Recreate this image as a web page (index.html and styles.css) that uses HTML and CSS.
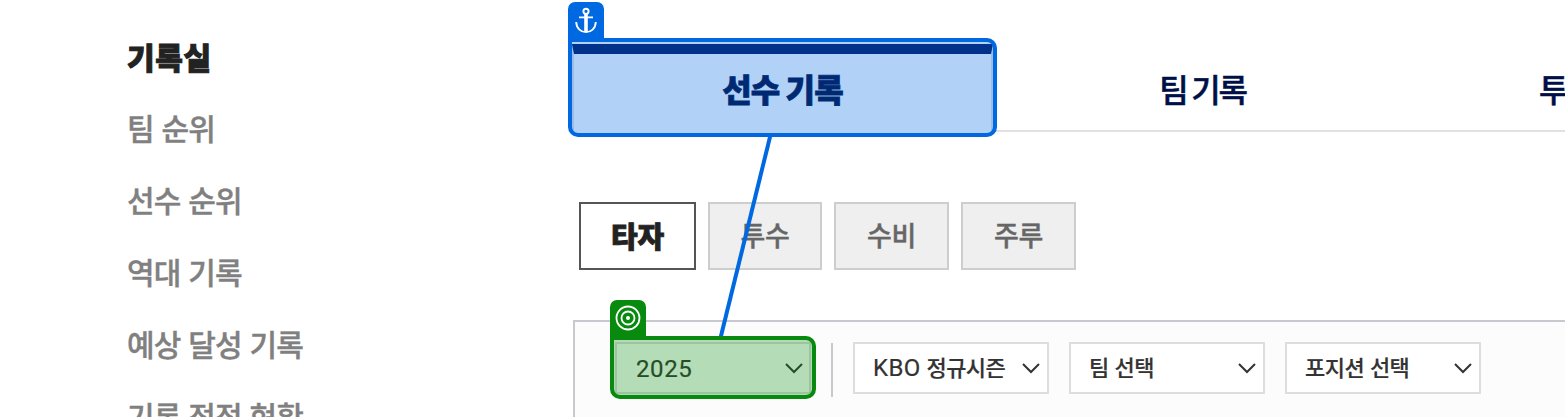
FILE: index.html
```html
<!DOCTYPE html>
<html lang="ko">
<head>
<meta charset="utf-8">
<title>기록실</title>
<link rel="stylesheet" href="styles.css">
</head>
<body>
<div class="page">
  <nav class="sidebar">
    <a class="side-link current">기록실</a>
    <a class="side-link">팀 순위</a>
    <a class="side-link">선수 순위</a>
    <a class="side-link">역대 기록</a>
    <a class="side-link">예상 달성 기록</a>
    <a class="side-link">기록 정정 현황</a>
  </nav>
  <main class="content">
    <div class="tabs">
      <a class="tab active">선수 기록</a>
      <a class="tab">팀 기록</a>
      <a class="tab cut">투</a>
    </div>
    <div class="pills">
      <a class="pill on">타자</a>
      <a class="pill narrow">투수</a>
      <a class="pill">수비</a>
      <a class="pill">주루</a>
    </div>
    <div class="filters">
      <div class="select year"><span>2025</span><svg class="chevron" viewBox="0 0 18 11"><path d="M1 1l8 8 8-8"/></svg></div>
      <div class="divider"></div>
      <div class="select"><span><span class="latin">KBO</span> 정규시즌</span><svg class="chevron" viewBox="0 0 18 11"><path d="M1 1l8 8 8-8"/></svg></div>
      <div class="select"><span>팀 선택</span><svg class="chevron" viewBox="0 0 18 11"><path d="M1 1l8 8 8-8"/></svg></div>
      <div class="select"><span>포지션 선택</span><svg class="chevron" viewBox="0 0 18 11"><path d="M1 1l8 8 8-8"/></svg></div>
    </div>
  </main>
  <svg class="connector" viewBox="0 0 1565 417"><path d="M770.5 135L720.5 338"/></svg>
  <div class="mark anchor">
    <svg class="badge" viewBox="0 0 36 38"><g fill="none" stroke="#fff" stroke-width="1.9"><circle cx="18" cy="9.300" r="2.600"/><path stroke-width="3.600" d="M18 12v18"/><path d="M11 15.400h14"/><path d="M8.200 20c.4 13.500 19.200 13.500 19.600 0"/></g></svg>
  </div>
  <div class="mark target">
    <svg class="badge" viewBox="0 0 36 38"><g fill="none" stroke="#fff" stroke-width="1.800"><circle cx="18" cy="18" r="11.500"/><circle cx="18" cy="18" r="6.500"/></g><circle cx="18" cy="18" r="2" fill="#fff"/></svg>
  </div>
</div>
</body>
</html>
```
FILE: styles.css
```css
* { box-sizing: border-box; }
body { margin: 0; background: #fff; overflow: hidden; font-family: "Noto Sans CJK KR", sans-serif; }
.page { position: relative; display: flex; width: 1565px; height: 417px; overflow: hidden; }
.sidebar { display: flex; flex-direction: column; flex: none; width: 572px; padding: 19px 0 0 127px; }
.side-link { flex: none; height: 72px; line-height: 72px; font-size: 30px; font-weight: 500; letter-spacing: -0.8px; color: #808080; white-space: nowrap; -webkit-text-stroke: 0.4px; }
.side-link.current { font-weight: 900; letter-spacing: 0.7px; line-height: 74px; color: #222; -webkit-text-stroke: 1px; }
.content { flex: none; width: 993px; padding-top: 44px; }
.tabs { display: flex; height: 88px; border-bottom: 2px solid #e1e1e1; }
.tab { flex: none; width: 421px; height: 86px; padding: 9px 2px 0 0; line-height: 70px; text-align: center; font-size: 32px; font-weight: 500; letter-spacing: -2.2px; word-spacing: -2px; color: #000f46; white-space: nowrap; -webkit-text-stroke: 0.5px; }
.tab.active { height: 90px; padding: 0; line-height: 69px; border: 2px solid #e1e1e1; border-top: 10px solid #001c66; border-bottom: 0; background: #fff; font-weight: 900; letter-spacing: -0.8px; -webkit-text-stroke: 0.8px; }
.tab.cut { padding-left: 125px; text-align: left; }
.pills { display: flex; gap: 12px; padding: 70px 0 0 7px; }
.pill { width: 115px; height: 68px; border: 2px solid #cdcdcd; background: #efefef; color: #666; font-size: 27px; font-weight: 500; letter-spacing: -0.3px; line-height: 61px; text-align: center; -webkit-text-stroke: 0.4px; }
.pill.narrow { width: 114px; }
.pill.on { width: 117px; border-color: #555; background: #fff; color: #222; font-size: 29px; font-weight: 900; line-height: 63px; -webkit-text-stroke: 0.8px; }
.filters { display: flex; gap: 20px; height: 120px; margin: 50px 0 0 1px; padding: 20px 0 0 40px; border: 2px solid #c8c8ce; border-right: 0; background: #fcfcfc; }
.select { display: flex; flex: none; align-items: center; justify-content: space-between; width: 196px; height: 52px; padding: 0 7px 4px 18px; border: 2px solid #ddd; background: #fff; color: #333; font-size: 22px; font-weight: 500; letter-spacing: -0.5px; white-space: nowrap; -webkit-text-stroke: 0.2px; }
.select.year { padding: 2px 6px 0 19px; font-family: Roboto, sans-serif; font-size: 24px; font-weight: 400; letter-spacing: 0.6px; }
.latin { font-family: Roboto, sans-serif; font-size: 24px; font-weight: 400; letter-spacing: 0.4px; line-height: 1; }
.chevron { width: 18px; height: 11px; margin-top: 4px; fill: none; stroke: #333; stroke-width: 2; }
.year .chevron { margin-top: -2px; }
.divider { flex: none; width: 2px; height: 54px; margin-top: 1px; background: #c8c8ce; }
.connector { position: absolute; inset: 0; width: 1565px; height: 417px; fill: none; stroke: #0068e0; stroke-width: 4; }
.mark { position: absolute; border: 4px solid; border-radius: 0 10px 10px 10px; }
.anchor { left: 568px; top: 38px; width: 429px; height: 99px; border-color: #0068e0; background: rgba(0, 104, 224, 0.3); }
.target { left: 610px; top: 336px; width: 206px; height: 63px; border-color: #078a0d; background: rgba(7, 138, 13, 0.3); }
.badge { position: absolute; left: -4px; top: -40px; width: 36px; height: 38px; border-radius: 7px 7px 0 0; }
.anchor .badge { background: #0068e0; }
.target .badge { background: #078a0d; }
```
